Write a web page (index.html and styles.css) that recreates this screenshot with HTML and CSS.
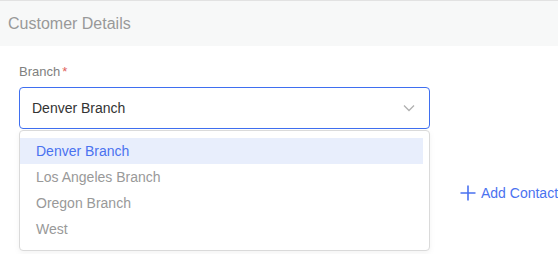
FILE: index.html
```html
<!DOCTYPE html>
<html lang="en">
  <head>
    <meta charset="utf-8" />
    <title>Customer Details</title>
    <link rel="stylesheet" href="styles.css">
  </head>
  <body>
    <div class="card">
      <div class="card-header">Customer Details</div>
      <div class="card-body">
        <div class="field">
          <label class="field-label">Branch<span class="required">*</span></label>
          <div class="select-wrap">
            <div class="select">
              <span class="select-value">Denver Branch</span>
              <svg class="chevron" width="12" height="8" viewBox="0 0 12 8">
                <path d="M1 1.5 L6 6.5 L11 1.5" fill="none" stroke="#b0b0b0" stroke-width="1.3" />
              </svg>
            </div>
            <ul class="dropdown">
              <li class="dropdown-item selected">Denver Branch</li>
              <li class="dropdown-item">Los Angeles Branch</li>
              <li class="dropdown-item">Oregon Branch</li>
              <li class="dropdown-item">West</li>
            </ul>
          </div>
        </div>
        <a class="add-contact" href="#">
          <svg width="16" height="16" viewBox="0 0 16 16">
            <path d="M8 0.5 V15.5 M0.5 8 H15.5" stroke="#4a72f0" stroke-width="1.6" />
          </svg>
          Add Contact
        </a>
      </div>
    </div>
  </body>
</html>
```

FILE: styles.css
```css
html {
  height: 100%;
}

body {
  margin: 0;
  height: 100%;
  background: white;
  font-family: "Liberation Sans", Arial, sans-serif;
}

.card {
  height: 100%;
}

.card-header {
  height: 45px;
  border-top: 1px solid #e2e2e2;
  background: #f7f8f8;
  padding-left: 8px;
  font-size: 16px;
  line-height: 46px;
  color: #999;
  white-space: nowrap;
}

.card-body {
  display: grid;
  grid-template-columns: 411px auto;
  column-gap: 30px;
  padding: 17px 0 0 19px;
}

.field-label {
  display: block;
  font-size: 13px;
  line-height: 18px;
  color: #808080;
  margin-bottom: 6px;
}

.required {
  color: #e0605a;
  margin-left: 2px;
}

.select-wrap {
  position: relative;
}

.select {
  display: flex;
  align-items: center;
  justify-content: space-between;
  height: 40px;
  border: 1px solid #3f6ff0;
  border-radius: 4px;
  padding: 0 14px 0 12px;
}

.select-value {
  font-size: 14px;
  color: #333;
}

.dropdown {
  position: absolute;
  top: calc(100% + 1px);
  left: 0;
  right: 0;
  margin: 0;
  padding: 7px 6px 8px 0;
  list-style: none;
  background: #fff;
  border: 1px solid #dadada;
  border-radius: 4px;
  box-shadow: 0 2px 6px rgba(0, 0, 0, 0.05);
}

.dropdown-item {
  height: 26px;
  line-height: 26px;
  padding-left: 16px;
  font-size: 14px;
  color: #999;
}

.dropdown-item.selected {
  background: #e8eefc;
  color: #4a72f0;
}

.add-contact {
  grid-column: 2;
  grid-row: 2;
  display: flex;
  align-items: center;
  gap: 5px;
  margin-top: 54px;
  font-size: 14px;
  line-height: 20px;
  color: #4a72f0;
  text-decoration: none;
  white-space: nowrap;
}
```
